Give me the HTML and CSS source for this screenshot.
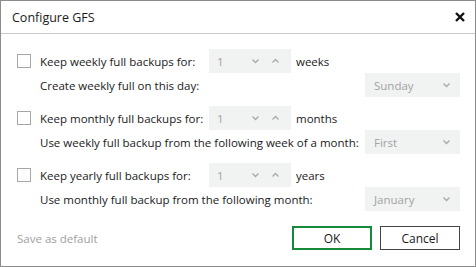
FILE: index.html
```html
<!DOCTYPE html>
<html lang="en">

<head>
	<meta charset="UTF-8">
	<meta name="viewport" content="width=device-width, initial-scale=1.0">
	<title>Configure GFS</title>
	<link rel="stylesheet" href="styles.css">
</head>

<body>
	<div class="dialog">
		<div class="dialog-header">
			<span class="dialog-title">Configure GFS</span>
			<svg class="close-icon" width="10" height="10" viewBox="0 0 10 10">
				<path d="M1 1 L9 9 M9 1 L1 9" stroke="#111" stroke-width="2.4" />
			</svg>
		</div>
		<div class="dialog-body">
			<div class="group">
				<div class="row">
					<span class="checkbox"></span>
					<span class="label">Keep weekly full backups for:</span>
					<div class="spinner">
						<span class="value">1</span>
						<svg class="chev" width="9" height="6" viewBox="0 0 9 6"><path d="M1.5 1.5 L4.5 4.5 L7.5 1.5" /></svg>
						<svg class="chev" width="9" height="6" viewBox="0 0 9 6"><path d="M1.5 4.5 L4.5 1.5 L7.5 4.5" /></svg>
					</div>
					<span class="unit">weeks</span>
				</div>
				<div class="row sub">
					<span class="sub-label">Create weekly full on this day:</span>
					<div class="dropdown">
						<span class="value">Sunday</span>
						<svg class="chev" width="9" height="6" viewBox="0 0 9 6"><path d="M1.5 1.5 L4.5 4.5 L7.5 1.5" /></svg>
					</div>
				</div>
			</div>
			<div class="group">
				<div class="row">
					<span class="checkbox"></span>
					<span class="label">Keep monthly full backups for:</span>
					<div class="spinner">
						<span class="value">1</span>
						<svg class="chev" width="9" height="6" viewBox="0 0 9 6"><path d="M1.5 1.5 L4.5 4.5 L7.5 1.5" /></svg>
						<svg class="chev" width="9" height="6" viewBox="0 0 9 6"><path d="M1.5 4.5 L4.5 1.5 L7.5 4.5" /></svg>
					</div>
					<span class="unit">months</span>
				</div>
				<div class="row sub">
					<span class="sub-label">Use weekly full backup from the following week of a month:</span>
					<div class="dropdown">
						<span class="value">First</span>
						<svg class="chev" width="9" height="6" viewBox="0 0 9 6"><path d="M1.5 1.5 L4.5 4.5 L7.5 1.5" /></svg>
					</div>
				</div>
			</div>
			<div class="group">
				<div class="row">
					<span class="checkbox"></span>
					<span class="label">Keep yearly full backups for:</span>
					<div class="spinner">
						<span class="value">1</span>
						<svg class="chev" width="9" height="6" viewBox="0 0 9 6"><path d="M1.5 1.5 L4.5 4.5 L7.5 1.5" /></svg>
						<svg class="chev" width="9" height="6" viewBox="0 0 9 6"><path d="M1.5 4.5 L4.5 1.5 L7.5 4.5" /></svg>
					</div>
					<span class="unit">years</span>
				</div>
				<div class="row sub">
					<span class="sub-label">Use monthly full backup from the following month:</span>
					<div class="dropdown">
						<span class="value">January</span>
						<svg class="chev" width="9" height="6" viewBox="0 0 9 6"><path d="M1.5 1.5 L4.5 4.5 L7.5 1.5" /></svg>
					</div>
				</div>
			</div>
		</div>
		<div class="dialog-footer">
			<span class="save-default">Save as default</span>
			<div class="buttons">
				<button class="btn btn-primary">OK</button>
				<button class="btn">Cancel</button>
			</div>
		</div>
	</div>
</body>

</html>
```

FILE: styles.css
```css
html,
body {
	margin: 0;
	background-color: #fff;
}

body {
	font-family: "Open Sans", "Noto Sans", sans-serif;
	font-size: 11.5px;
	color: #1a1a1a;
}

.dialog {
	width: 476px;
	height: 267px;
	box-sizing: border-box;
	border: 1px solid #8c8c8c;
	display: flex;
	flex-direction: column;
}

.dialog-header {
	height: 32px;
	border-bottom: 1px solid #c8c8c8;
	display: flex;
	align-items: center;
	justify-content: space-between;
	padding: 0 10px 0 11px;
}

.dialog-title {
	font-size: 12.5px;
}

.close-icon {
	display: block;
}

.close-icon path {
	fill: none;
}

.dialog-body {
	padding: 15px 15px 0 16px;
	display: flex;
	flex-direction: column;
	gap: 9px;
}

.group {
	display: flex;
	flex-direction: column;
}

.row {
	display: flex;
	align-items: center;
	height: 24px;
}

.checkbox {
	width: 12px;
	height: 12px;
	border: 1px solid #a6a6a6;
	margin-right: 9px;
	flex-shrink: 0;
}

.label {
	width: 169px;
}

.sub {
	padding-left: 23px;
}

.sub-label {
	flex: 1;
}

.spinner,
.dropdown {
	height: 24px;
	background-color: #f1f2f2;
	display: flex;
	align-items: center;
	color: #a3a3a3;
	box-sizing: border-box;
}

.spinner {
	width: 82px;
	padding: 0 11px 0 8px;
	gap: 11px;
}

.spinner .value {
	flex: 1;
}

.dropdown {
	width: 95px;
	padding: 0 9px 0 9px;
}

.dropdown .value {
	flex: 1;
}

.chev {
	display: block;
}

.chev path {
	fill: none;
	stroke: #a8a8a8;
	stroke-width: 1.3;
}

.unit {
	margin-left: 5px;
}

.dialog-footer {
	margin-top: auto;
	padding: 0 15px 16px 16px;
	display: flex;
	align-items: center;
	justify-content: space-between;
}

.save-default {
	color: #a0a0a0;
}

.buttons {
	display: flex;
	gap: 8px;
}

.btn {
	width: 80px;
	height: 24px;
	background-color: #fff;
	border: 1px solid #444;
	font-family: inherit;
	font-size: 12px;
	color: #1a1a1a;
	padding: 0;
}

.btn-primary {
	border: 2px solid #178a3a;
}
```
